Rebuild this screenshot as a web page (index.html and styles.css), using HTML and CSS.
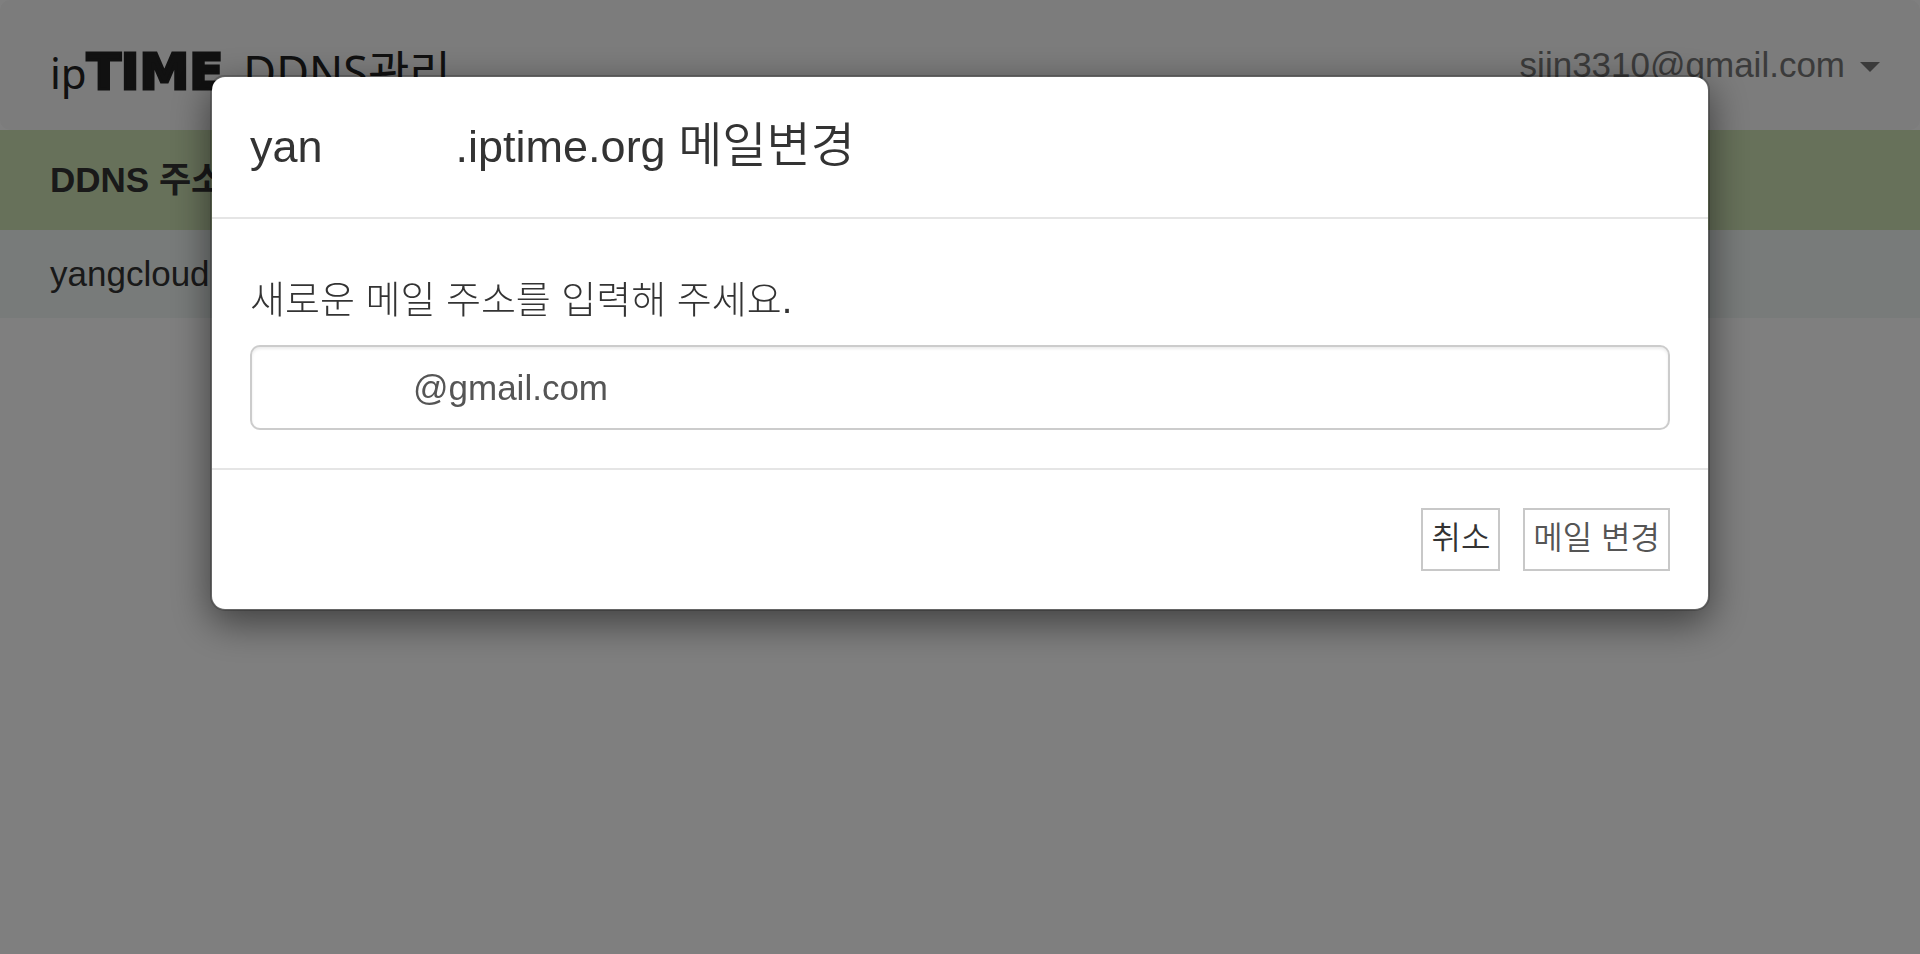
FILE: index.html
```
<!DOCTYPE html>
<html lang="ko">
<head>
  <meta charset="UTF-8">
  <meta name="viewport" content="width=device-width, initial-scale=1.0">
  <title>ipTIME DDNS관리</title>
  <link rel="stylesheet" href="styles.css">
</head>
<body>
  <header class="navbar">
    <a class="logo" href="#"><span class="logo-ip">ip</span><span class="logo-time">TIME</span> <span class="logo-ddns">DDNS관리</span></a>
    <a class="account" href="#">sjin3310@gmail.com <span class="caret"></span></a>
  </header>
  <table class="ddns-table">
    <thead>
      <tr><th>DDNS 주소</th></tr>
    </thead>
    <tbody>
      <tr><td>yangcloud</td></tr>
    </tbody>
  </table>

  <!-- Mail change dialog -->
  <div class="modal-backdrop">
    <form class="modal" role="dialog" aria-labelledby="modal-title">
      <div class="modal-header">
        <h4 class="modal-title" id="modal-title">yan<span class="masked"></span>.iptime.org <span class="modal-action">메일변경</span></h4>
      </div>
      <div class="modal-body">
        <label for="mail">새로운 메일 주소를 입력해 주세요.</label>
        <input type="text" id="mail" class="form-control" value="@gmail.com">
      </div>
      <div class="modal-footer">
        <button type="button" class="btn btn-cancel">취소</button>
        <button type="button" class="btn">메일 변경</button>
      </div>
    </form>
  </div>
</body>
</html>
```
FILE: styles.css
```
* {
  box-sizing: border-box;
}
body {
  margin: 0;
  background: #fff;
  color: #333;
  font-family: "Liberation Sans", "Noto Sans CJK KR", sans-serif;
  font-size: 35px;
  line-height: 50px;
}
a {
  text-decoration: none;
}
.navbar {
  display: flex;
  justify-content: space-between;
  align-items: center;
  height: 130px;
  padding: 0 40px 0 50px;
  background: #f8f8f8;
  border-radius: 10px;
}
.logo {
  display: flex;
  align-items: baseline;
  margin-top: 14px;
  color: #222;
}
.logo-ip {
  font-family: "Noto Sans", sans-serif;
  font-size: 42px;
}
.logo-time {
  font-family: "DejaVu Sans", sans-serif;
  font-size: 50px;
  font-weight: bold;
  -webkit-text-stroke: 3px #222;
}
.logo-ddns {
  margin-left: 20px;
  font-family: "Noto Sans", "Noto Sans CJK KR", sans-serif;
  font-size: 45px;
}
.account {
  display: flex;
  align-items: center;
  gap: 15px;
  color: #777;
}
.caret {
  margin-top: 4px;
  border-top: 10px solid #777;
  border-left: 10px solid transparent;
  border-right: 10px solid transparent;
}

/* Address list */
.ddns-table {
  width: 100%;
  border-collapse: collapse;
  text-align: left;
}
.ddns-table th {
  height: 100px;
  padding: 0 50px;
  background: #cee2b4;
}
.ddns-table td {
  height: 88px;
  padding: 0 50px;
  background: #f0f6f4;
}

/* Modal */
.modal-backdrop {
  position: fixed;
  inset: 0;
  padding: 75px 20px;
  background: rgba(0, 0, 0, 0.5);
}
.modal {
  max-width: 1500px;
  margin: 0 auto;
  background: #fff;
  background-clip: padding-box;
  border: 2px solid rgba(0, 0, 0, 0.2);
  border-radius: 15px;
  box-shadow: 0 12px 38px rgba(0, 0, 0, 0.5);
}
.modal-header {
  padding: 38px;
  border-bottom: 2px solid #e5e5e5;
}
.modal-title {
  margin: 0;
  font-size: 45px;
  font-weight: 350;
  line-height: 64px;
}
.modal-action {
  font-size: 48px;
  line-height: 1;
}
.masked {
  display: inline-block;
  width: 133px;
}
.modal-body {
  padding: 38px;
}
.modal-body label {
  display: block;
  padding: 18px 0 20px;
  font-size: 38px;
  font-weight: 300;
}
.form-control {
  display: block;
  width: 100%;
  height: 85px;
  padding: 0 30px 0 161px;
  border: 2px solid #ccc;
  border-radius: 10px;
  box-shadow: inset 0 2px 3px rgba(0, 0, 0, 0.08);
  color: #555;
  font-family: inherit;
  font-size: 35px;
}
.modal-footer {
  display: flex;
  justify-content: flex-end;
  gap: 23px;
  padding: 38px;
  border-top: 2px solid #e5e5e5;
}
.btn {
  height: 63px;
  padding: 0 8px 10px;
  background: #fff;
  border: 2px solid #c8c8c8;
  color: #555;
  font-family: inherit;
  font-size: 32px;
  font-weight: 350;
  cursor: pointer;
}
.btn-cancel {
  color: #333;
}
```
